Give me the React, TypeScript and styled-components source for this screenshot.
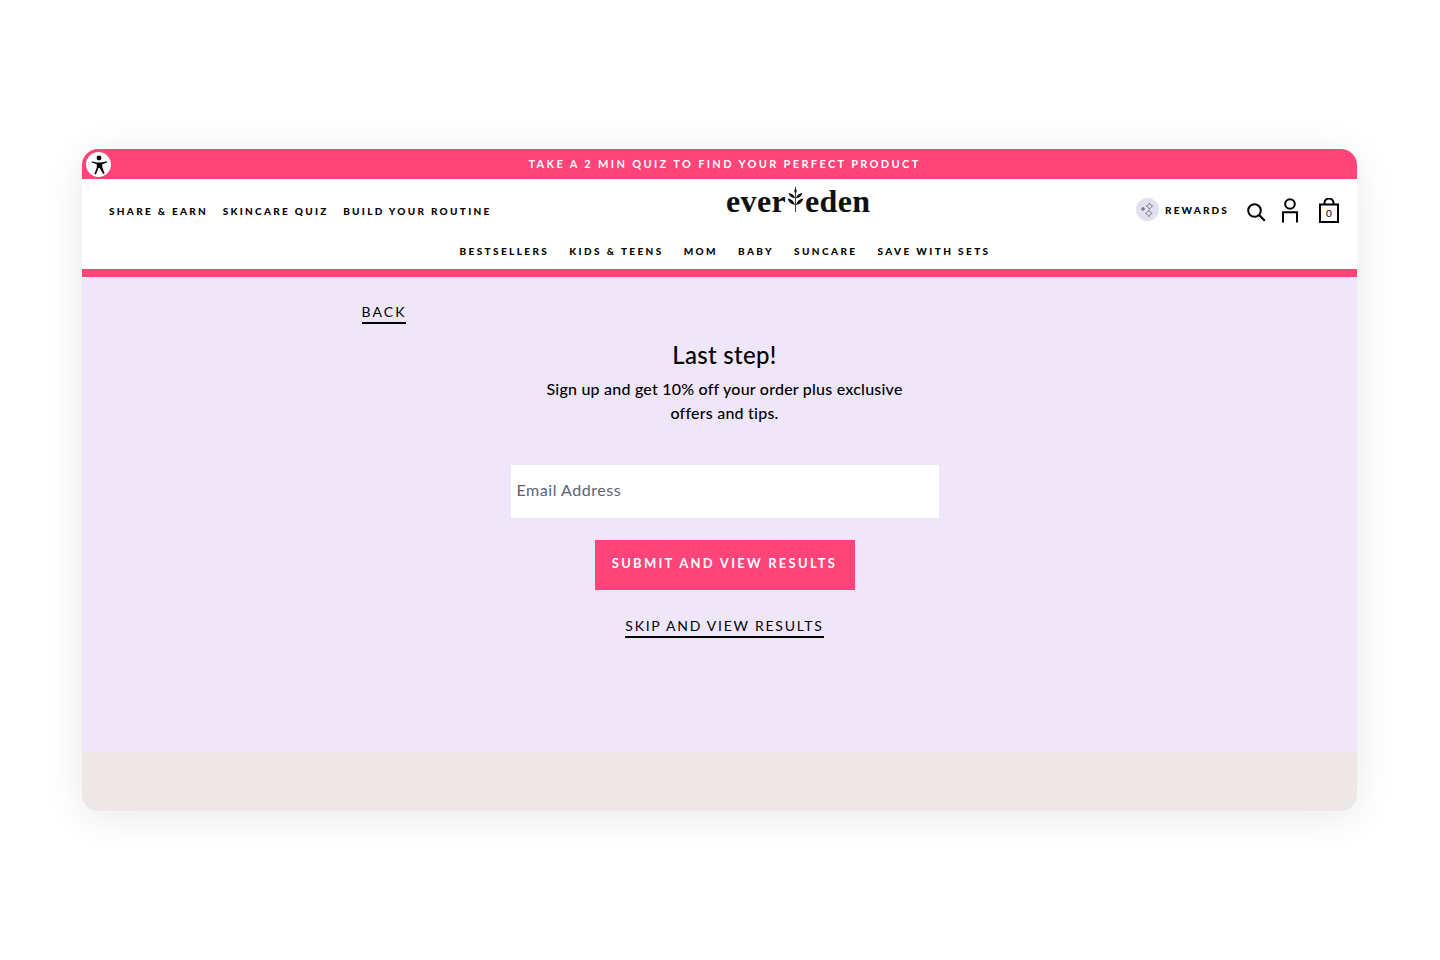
import React from "react";
import styled, { createGlobalStyle } from "styled-components";

const Global = createGlobalStyle`
  html, body { margin: 0; padding: 0; background: #fff; }
  body { font-family: "Lato", "Liberation Sans", sans-serif; color: #000; }
  * { box-sizing: border-box; }
`;
const Page = styled.div`
  width: 1440px; height: 960px; padding: 149px 83px 0 82px; overflow: hidden;
`;
const Frame = styled.div`
  height: 662px; border-radius: 16px; overflow: hidden; display: flex; flex-direction: column;
  box-shadow: 0 6px 40px rgba(0,0,0,.09);
  background: #fff;
`;
const Announcement = styled.div`
  position: relative; height: 30px; flex: none; background: #fe4479; color: #fff;
  display: flex; align-items: center; justify-content: center; padding-left: 10px;
  font-size: 11px; font-weight: 700; letter-spacing: 2.34px; padding-bottom: 1px;
`;
const A11y = styled.div`
  position: absolute; left: 4px; top: 3px; width: 25px; height: 25px; border-radius: 50%;
  background: #fff; display: flex; align-items: center; justify-content: center;
`;
const Header = styled.header`
  height: 90px; flex: none; display: flex; flex-direction: column;
`;
const TopRow = styled.div`
  height: 60px; display: flex; align-items: flex-start; padding: 0 18px 0 27px;
`;
const LeftNav = styled.nav`
  display: flex; gap: 14.5px; width: 382px; margin-top: 25px; flex: none;
`;
const NavItem = styled.span<{ $tracking?: number }>`
  font-size: 10px; line-height: 14px; font-weight: 900; letter-spacing: ${p => p.$tracking ?? 2.3}px; white-space: nowrap;
`;
const Logo = styled.div`
  margin-left: 235px; margin-top: 4px; height: 36px; display: flex; align-items: center;
  font-family: "Liberation Serif", serif; font-weight: 700; font-size: 32px; letter-spacing: .35px; color: #111;
`;
const RightNav = styled.div`
  margin-left: auto; display: flex; align-items: center; margin-top: 17px;
`;
const RewardBadge = styled.div`
  width: 23px; height: 23px; border-radius: 50%; background: #e2dfef; display: flex;
  align-items: center; justify-content: center; margin-right: 6px;
`;
const RewardText = styled.span`
  font-size: 10px; font-weight: 900; letter-spacing: 2.15px; margin-right: 17px; line-height: 14px;
`;
const IconSlot = styled.div<{ $gap: number; $top?: number }>`
  display: flex; margin-right: ${p => p.$gap}px; padding-top: ${p => p.$top ?? 0}px;
`;
const BottomRow = styled.nav`
  height: 30px; display: flex; justify-content: center; gap: 20px; padding: 5px 0 0 11px;
`;
const Divider = styled.div`
  height: 8px; flex: none; background: #fe4479;
`;
const Main = styled.main`
  height: 475px; flex: none; background: #f0e6fa; display: flex; flex-direction: column;
  align-items: center; padding-left: 10px;
`;
const Column = styled.div`
  width: 726px; display: flex; flex-direction: column; align-items: center;
`;
const UnderLink = styled.a<{ $tracking: number }>`
  display: inline-block; font-size: 14px; line-height: 17px; letter-spacing: ${p => p.$tracking}px; color: #000; white-space: nowrap;
  padding-bottom: 2px; border-bottom: 2px solid #000;
`;
const BackRow = styled.div`
  width: 100%; margin-top: 24px;
`;
const Title = styled.h1`
  margin: 16px 0 0; font-size: 24px; line-height: 30px; font-weight: 500; letter-spacing: .3px;
`;
const Copy = styled.p`
  margin: 7px 0 0; width: 370px; text-align: center; font-size: 16px; line-height: 24px; font-weight: 500; letter-spacing: .22px;
`;
const Email = styled.div`
  width: 428px; height: 53px; margin-top: 40px; background: #fff; display: flex; align-items: center;
  padding: 0 6px 4px; font-size: 16px; letter-spacing: .55px; color: #5e6170;
`;
const Submit = styled.button`
  width: 260px; height: 50px; margin-top: 22px; border: 0; background: #fe4479; color: #fff;
  font-family: inherit; font-size: 13px; font-weight: 700; letter-spacing: 2.26px; padding: 0 0 4px;
`;
const SkipWrap = styled.div`
  margin-top: 25px;
`;
const Footer = styled.footer`
  flex: 1; background: #ede8e6;
`;

function AccessIcon() {
  return (
    <svg width="18" height="20" viewBox="0 0 18 20" fill="#000">
      <circle cx="9" cy="3" r="2.4" />
      <path d="M1.5 6.2l5 1.3h5l5-1.3.5 1.4-4.8 1.6v2.6l2.4 6.6-1.5.6L9.6 13H8.4l-2.5 6.6-1.5-.6 2.4-6.6V9.2L2 7.6z" />
    </svg>
  );
}
function Leaf() {
  return (
    <svg width="17" height="25" viewBox="0 0 17 25" fill="#111" style={{ margin: "0 1px 3px 1px" }}>
      <path d="M8.1 0h.8v25h-.8z" />
      <path d="M8.5 1.5c1.6 1.5 1.6 3.2 0 5-1.6-1.8-1.6-3.5 0-5z" />
      <path d="M1.5 6c3.2.3 5.6 2 6.6 5.3C4.8 11 2.5 9.2 1.5 6zM15.5 6c-3.2.3-5.6 2-6.6 5.3C12.2 11 14.5 9.2 15.5 6z" />
      <path d="M.5 11.5c3.5.2 6.3 2.3 7.6 6.3C4.2 17.5 1.7 15.3.5 11.5zM16.5 11.5c-3.5.2-6.3 2.3-7.6 6.3 3.9-.3 6.4-2.5 7.6-6.3z" />
    </svg>
  );
}
function Sparkles() {
  return (
    <svg width="15" height="15" viewBox="0 0 15 15" fill="none" stroke="#6d6d80" strokeWidth=".8">
      <path d="M9.5 1l1.2 2 2 1.2-2 1.2-1.2 2-1.2-2-2-1.2 2-1.2zM8.8 8l1.3 2.1 2.1 1.3-2.1 1.2-1.3 2.1-1.2-2.1-2.1-1.2 2.1-1.300z" />
      <path d="M3 5.2l.7 1.1 1.1.7-1.1.6-.7 1.1-.6-1.1-1.1-.6 1.1-.7z" fill="#6d6d80" />
    </svg>
  );
}
function SearchIcon() {
  return (
    <svg width="20" height="20" viewBox="0 0 20 20" fill="none" stroke="#000" strokeWidth="2">
      <circle cx="8.5" cy="8.5" r="6.3" />
      <path d="M13 13l5.8 5.8" strokeWidth="2.2" />
    </svg>
  );
}
function UserIcon() {
  return (
    <svg width="18" height="25" viewBox="0 0 18 25" fill="none" stroke="#000" strokeWidth="2">
      <circle cx="9" cy="6" r="4.8" />
      <path d="M2 24.5V14.3h14v10.2" />
    </svg>
  );
}
function BagIcon() {
  return (
    <svg width="20" height="25" viewBox="0 0 20 25" fill="none" stroke="#000" strokeWidth="2">
      <path d="M1 6.5h18V24H1z" />
      <path d="M5.5 6.5V5a4.5 4.5 0 019 0v1.5" />
      <text x="10" y="19" textAnchor="middle" fontSize="10" fontFamily="Lato, sans-serif" fill="#000" stroke="none">0</text>
    </svg>
  );
}

export default function App() {
  return (
    <>
      <Global />
      <Page>
        <Frame>
          <Announcement>
            <A11y><AccessIcon /></A11y>
            TAKE A 2 MIN QUIZ TO FIND YOUR PERFECT PRODUCT
          </Announcement>
          <Header>
            <TopRow>
              <LeftNav>
                <NavItem>SHARE &amp; EARN</NavItem>
                <NavItem>SKINCARE QUIZ</NavItem>
                <NavItem>BUILD YOUR ROUTINE</NavItem>
              </LeftNav>
              <Logo>ever<Leaf />eden</Logo>
              <RightNav>
                <RewardBadge><Sparkles /></RewardBadge>
                <RewardText>REWARDS</RewardText>
                <IconSlot $gap={15} $top={4}><SearchIcon /></IconSlot>
                <IconSlot $gap={20} $top={2}><UserIcon /></IconSlot>
                <IconSlot $gap={0} $top={2}><BagIcon /></IconSlot>
              </RightNav>
            </TopRow>
            <BottomRow>
              {["BESTSELLERS", "KIDS & TEENS", "MOM", "BABY", "SUNCARE", "SAVE WITH SETS"].map(t => (
                <NavItem key={t} $tracking={2.4}>{t}</NavItem>
              ))}
            </BottomRow>
          </Header>
          <Divider />
          <Main>
            <Column>
              <BackRow><UnderLink $tracking={2.05}>BACK</UnderLink></BackRow>
              <Title>Last step!</Title>
              <Copy>Sign up and get 10% off your order plus exclusive offers and tips.</Copy>
              <Email>Email Address</Email>
              <Submit>SUBMIT AND VIEW RESULTS</Submit>
              <SkipWrap><UnderLink $tracking={1.75}>SKIP AND VIEW RESULTS</UnderLink></SkipWrap>
            </Column>
          </Main>
          <Footer />
        </Frame>
      </Page>
    </>
  );
}
